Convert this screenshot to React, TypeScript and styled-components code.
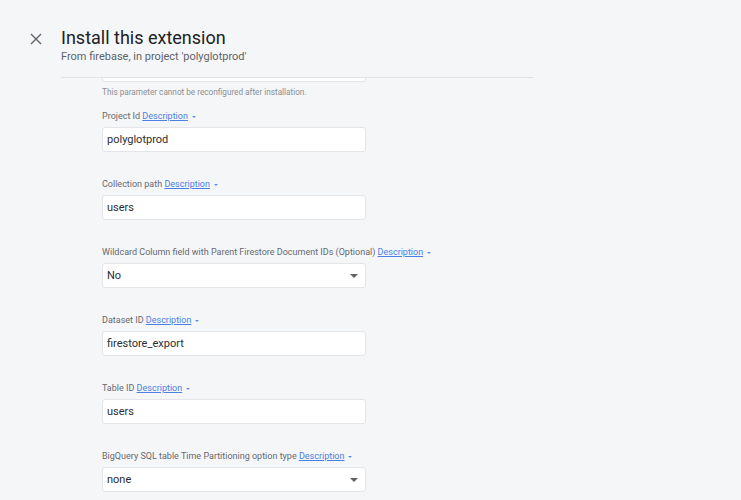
import { useLayoutEffect, useRef } from "react";
import styled, { createGlobalStyle } from "styled-components";

const GlobalStyle = createGlobalStyle`
  html, body {
    margin: 0;
    padding: 0;
    background: #F5F6F8;
    font-family: Roboto, "Noto Sans", Arial, sans-serif;
    overflow: hidden;
  }
`;

type FieldData = {
  label: string;
  value: string;
  select?: boolean;
  helper?: string;
};

const fields: FieldData[] = [
  {
    label: "Cloud Functions location",
    value: "Iowa (us-central1)",
    select: true,
    helper: "This parameter cannot be reconfigured after installation.",
  },
  { label: "Project Id", value: "polyglotprod" },
  { label: "Collection path", value: "users" },
  {
    label: "Wildcard Column field with Parent Firestore Document IDs (Optional)",
    value: "No",
    select: true,
  },
  { label: "Dataset ID", value: "firestore_export" },
  { label: "Table ID", value: "users" },
  {
    label: "BigQuery SQL table Time Partitioning option type",
    value: "none",
    select: true,
  },
  { label: "BigQuery Time Partitioning column name", value: "" },
];

const CloseIcon = () => (
  <svg width="12" height="12" viewBox="0 0 12 12">
    <path d="M1 1L11 11M11 1L1 11" stroke="#5F6368" strokeWidth="1.4" fill="none" />
  </svg>
);

const App = () => {
  const scrollRef = useRef<HTMLDivElement>(null);

  // the form is shown scrolled a little, the first field sits under the header
  useLayoutEffect(() => {
    if (scrollRef.current) scrollRef.current.scrollTop = 64;
  }, []);

  return (
    <StyledPage>
      <GlobalStyle />
      <StyledHeader>
        <StyledCloseButton aria-label="close">
          <CloseIcon />
        </StyledCloseButton>
        <StyledHeading>
          <StyledTitle>Install this extension</StyledTitle>
          <StyledSubtitle>From firebase, in project 'polyglotprod'</StyledSubtitle>
        </StyledHeading>
      </StyledHeader>
      <StyledScroll ref={scrollRef}>
        <StyledForm>
          {fields.map((field) => (
            <StyledField key={field.label} $helper={!!field.helper}>
              <StyledLabel>
                {field.label} <StyledLink>Description</StyledLink>
                <StyledCaret $color="#5F8EE6" />
              </StyledLabel>
              <StyledInput>
                <span>{field.value}</span>
                {field.select && <StyledCaret $color="#5F6368" $big />}
              </StyledInput>
              {field.helper && <StyledHelper>{field.helper}</StyledHelper>}
            </StyledField>
          ))}
        </StyledForm>
      </StyledScroll>
    </StyledPage>
  );
};

const StyledPage = styled.div`
  width: 741px;
  height: 500px;
  display: flex;
  flex-direction: column;
`;

const StyledHeader = styled.div`
  height: 78px;
  flex-shrink: 0;
  display: flex;
  align-items: flex-start;
  padding-left: 30px;
  box-sizing: border-box;
`;

const StyledCloseButton = styled.div`
  width: 12px;
  height: 12px;
  margin-top: 33px;
  display: flex;
`;

const StyledHeading = styled.div`
  margin-left: 19px;
  width: 472px;
  height: 78px;
  padding-top: 28px;
  box-sizing: border-box;
  border-bottom: 1px solid #E0E2E6;
`;

const StyledTitle = styled.div`
  color: #202124;
  font-size: 18px;
  line-height: 20px;
`;

const StyledSubtitle = styled.div`
  margin-top: 2px;
  color: #5F6368;
  font-size: 11px;
  line-height: 13px;
`;

const StyledScroll = styled.div`
  flex: 1;
  overflow: hidden;
`;

const StyledForm = styled.div`
  padding: 24px 0 40px 102px;
`;

const StyledField = styled.div<{ $helper: boolean }>`
  width: 264px;
  padding-bottom: ${(p) => (p.$helper ? "9px" : "24px")};
`;

const StyledLabel = styled.div`
  color: #65696E;
  font-size: 9px;
  line-height: 16px;
  white-space: nowrap;
`;

const StyledLink = styled.span`
  color: #4A80E4;
  text-decoration: underline;
`;

const StyledCaret = styled.span<{ $color: string; $big?: boolean }>`
  display: inline-block;
  width: 0;
  height: 0;
  margin-left: ${(p) => (p.$big ? "0" : "4px")};
  vertical-align: middle;
  border-left: ${(p) => (p.$big ? "4px" : "2.5px")} solid transparent;
  border-right: ${(p) => (p.$big ? "4px" : "2.5px")} solid transparent;
  border-top: ${(p) => (p.$big ? "4px" : "2.5px")} solid ${(p) => p.$color};
`;

const StyledInput = styled.div`
  margin-top: 3px;
  height: 25px;
  box-sizing: border-box;
  background: #FFFFFF;
  border: 1px solid #E3E5E8;
  border-radius: 3px;
  display: flex;
  align-items: center;
  justify-content: space-between;
  padding: 0 7px 0 4px;
  color: #2B2D30;
  font-size: 11px;
`;

const StyledHelper = styled.div`
  margin-top: 3px;
  color: #8A8F94;
  font-size: 8.2px;
  line-height: 14px;
  white-space: nowrap;
`;

export default App;
